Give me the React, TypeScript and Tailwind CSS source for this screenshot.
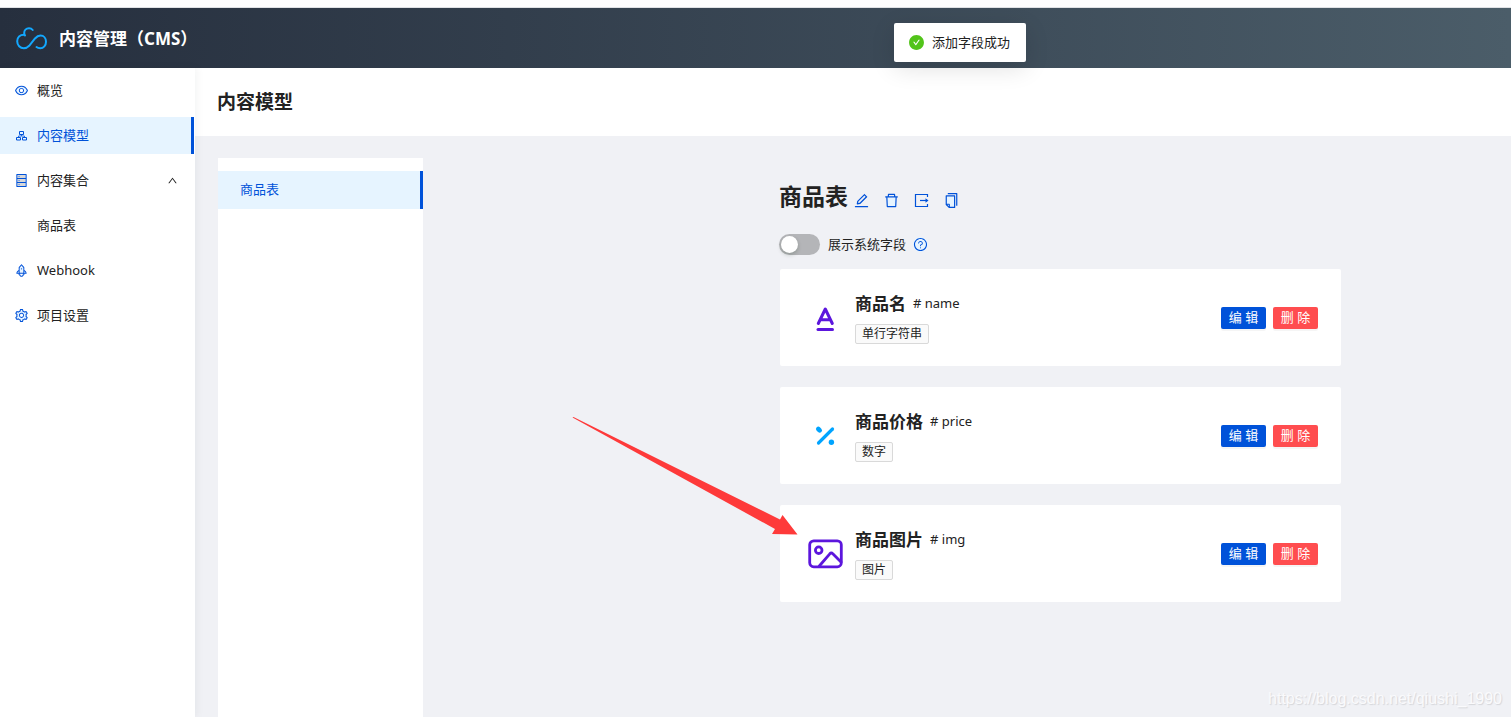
import type { ReactNode } from 'react';
import {
  AiFillCheckCircle,
  AiOutlineEdit,
  AiOutlineQuestionCircle,
  AiOutlineUp,
  AiTwotoneCopy,
  AiTwotoneDatabase,
  AiTwotoneDelete,
  AiTwotoneEye,
  AiTwotoneRocket,
  AiTwotoneSetting,
} from 'react-icons/ai';

// second tone of the two-tone icons
const TWO_TONE = 'text-[#0052d9] [&_path[fill="#D9D9D9"]]:fill-[#e6f4ff] [&_path[fill="#E6E6E6"]]:fill-[#e6f4ff]';

interface Field {
  title: string;
  name: string;
  type: string;
  icon: ReactNode;
}

function ModelIcon() {
  return (
    <svg width="15" height="15" viewBox="0 0 15 15" fill="none" stroke="currentColor">
      <path d="M5.500 3.500h4v3h-4zM2.500 9.500h4v2.500h-4zM8.500 9.500h4v2.500h-4z" />
      <path d="M7.500 6.500v1.500M4.500 9.500v-1.500h6v1.500" strokeWidth="0.800" />
    </svg>
  );
}

function ExportIcon() {
  return (
    <svg width="17" height="17" viewBox="0 0 17 17" fill="none" stroke="currentColor" strokeWidth="1.200">
      <path d="M14.500 5V2.500h-12v12h12V12" />
      <path d="M7 8.500h7.500" />
      <path d="m12.500 6.300 3 2.200-3 2.200Z" fill="currentColor" stroke="none" />
    </svg>
  );
}

function StringIcon() {
  return (
    <svg width="36" height="36" viewBox="0 0 36 36" fill="none" stroke="#5c16dd" strokeWidth="3" strokeLinecap="round" strokeLinejoin="round">
      <path d="m11.300 23.500 7-14.500 7 14.500M14 19.700h8.600" />
      <path d="M11 29.500h14.500" />
    </svg>
  );
}

function NumberIcon() {
  return (
    <svg width="36" height="36" viewBox="0 0 36 36" fill="none">
      <path d="M11.500 25 25.500 11" stroke="#00a4ff" strokeWidth="3.200" strokeLinecap="round" />
      <path d="m11.300 11 1.400 1.400" stroke="#00a4ff" strokeWidth="4.600" strokeLinecap="round" />
      <circle cx="24.400" cy="24.200" r="2.700" fill="#00a4ff" />
    </svg>
  );
}

function ImageIcon() {
  return (
    <svg width="36" height="36" viewBox="0 0 36 36" fill="none" stroke="#5c16dd" strokeWidth="2.800" strokeLinecap="round" strokeLinejoin="round">
      <rect x="2.700" y="4.800" width="31.600" height="26" rx="4" />
      <circle cx="11.700" cy="14.200" r="3.300" />
      <path d="m12.300 30 10.500-12.200q1.500-1.600 3 0L34 26" />
    </svg>
  );
}

const FIELDS: Field[] = [
  { title: '商品名', name: 'name', type: '单行字符串', icon: <StringIcon /> },
  { title: '商品价格', name: 'price', type: '数字', icon: <NumberIcon /> },
  { title: '商品图片', name: 'img', type: '图片', icon: <ImageIcon /> },
];

function MenuItem({ icon, label, active, open }: { icon?: ReactNode; label: string; active?: boolean; open?: boolean }) {
  return (
    <a
      href="#"
      aria-current={active ? 'page' : undefined}
      className={`flex h-[37px] items-center gap-2 pl-[14px] pr-4 ${
        active ? 'border-r-[3px] border-[#0052d9] bg-[#e6f4ff] text-[#0052d9]' : ''
      }`}
    >
      <span className={`w-[15px] text-[15px] ${TWO_TONE}`}>{icon}</span>
      <span className="flex-1">{label}</span>
      {open && <AiOutlineUp size={11} />}
    </a>
  );
}

function FieldCard({ field }: { field: Field }) {
  return (
    <li className="flex h-[97px] items-center rounded-xs bg-white pl-[27px] pr-[23px]">
      {field.icon}
      <div className="ml-3 flex-1">
        <div className="flex items-center gap-[7px]">
          <h3 className="text-[17px] leading-6 font-bold">{field.title}</h3>
          <span># {field.name}</span>
        </div>
        <span className="mt-2 inline-flex h-5 items-center rounded-xs border border-[#d9d9d9] bg-[#fafafa] px-[6px] text-xs">
          {field.type}
        </span>
      </div>
      <div className="flex gap-[7px] text-white">
        <button type="button" className="h-[22px] w-[45px] rounded-xs bg-[#0052d9] shadow-[0_2px_0_rgba(0,0,0,0.04)]">
          编 辑
        </button>
        <button type="button" className="h-[22px] w-[45px] rounded-xs bg-[#ff4d4f] shadow-[0_2px_0_rgba(0,0,0,0.04)]">
          删 除
        </button>
      </div>
    </li>
  );
}

export default function App() {
  return (
    <div className="relative flex min-h-screen flex-col overflow-hidden bg-[#f0f1f5] font-['Noto_Sans','Noto_Sans_CJK_SC',sans-serif] text-[13px] text-[#222]">
      <div className="h-2 border-b border-[#dfe1e5] bg-[#fdfdfe]" />

      <header className="flex h-[60px] items-center gap-3 bg-linear-to-r from-[#262f3e] to-[#4b5d69] pt-[2px] pl-4 text-white">
        <svg width="31" height="24" viewBox="0 0 31 24" fill="none" stroke="#13a8ff" strokeWidth="2" strokeLinecap="round">
          <path d="M16.700 3C15.700 1.700 14.500 1.300 13 1.300 10 1.300 8.200 3.500 8.200 6c0 1 .3 1.700.8 2.500" />
          <path d="M8 7.700C4 7.700 1.200 10.500 1.200 14.300c0 4 3 7 6.600 7 2.200 0 3.800-.9 5.400-2.500L19 11.500c1.600-1.800 3.200-3 5.500-3 3.300 0 5.500 2.700 5.500 6.200 0 3.800-2.500 6.600-5.700 6.600-1.500 0-2.700-.3-3.800-1.200" />
        </svg>
        <h1 className="text-[17px] font-bold">内容管理（CMS）</h1>
      </header>

      <div className="flex flex-1">
        <nav className="z-10 flex w-[195px] shrink-0 flex-col gap-2 bg-white pt-1 pr-px shadow-[2px_0_8px_rgba(29,35,41,0.05)]">
          <MenuItem icon={<AiTwotoneEye />} label="概览" />
          <MenuItem icon={<ModelIcon />} label="内容模型" active />
          <MenuItem icon={<AiTwotoneDatabase />} label="内容集合" open />
          <MenuItem label="商品表" />
          <MenuItem icon={<AiTwotoneRocket />} label="Webhook" />
          <MenuItem icon={<AiTwotoneSetting />} label="项目设置" />
        </nav>

        <main className="flex flex-1 flex-col">
          <div className="flex h-[68px] items-center bg-white pl-[22px]">
            <h2 className="text-[19px] font-bold">内容模型</h2>
          </div>

          <div className="flex flex-1 pt-[22px] pr-[22px] pl-[23px]">
            <div className="w-[205px] shrink-0 bg-white pt-[13px]">
              <a href="#" className="flex h-[38px] items-center border-r-[3px] border-[#0052d9] bg-[#e6f4ff] pl-[22px] text-[#0052d9]">
                商品表
              </a>
            </div>

            <section className="flex flex-1 justify-center pt-5 pl-[208px]">
              <div className="w-full max-w-[562px]">
                <div className="flex h-9 items-center gap-[5px]">
                  <h2 className="text-[23px] font-bold">商品表</h2>
                  <div className={`mt-2 flex gap-[13px] ${TWO_TONE}`}>
                    <button type="button" aria-label="编辑"><AiOutlineEdit size={17} /></button>
                    <button type="button" aria-label="删除"><AiTwotoneDelete size={17} /></button>
                    <button type="button" aria-label="导出"><ExportIcon /></button>
                    <button type="button" aria-label="复制"><AiTwotoneCopy size={17} /></button>
                  </div>
                </div>

                <div className="mt-5 flex h-[21px] items-center">
                  <label className="flex items-center gap-2">
                    <input
                      type="checkbox"
                      role="switch"
                      className="h-[21px] w-[41px] appearance-none rounded-full bg-[#b4b5b8] p-[2px] before:block before:size-[17px] before:rounded-full before:bg-white before:shadow-[0_2px_4px_rgba(0,35,11,0.2)]"
                    />
                    展示系统字段
                  </label>
                  <AiOutlineQuestionCircle size={15} className="ml-[7px] rounded-full bg-[#e6f4ff] text-[#0052d9]" />
                </div>

                <ul className="mt-[14px] flex flex-col gap-[21px] pl-px">
                  {FIELDS.map((field) => (
                    <FieldCard key={field.name} field={field} />
                  ))}
                </ul>
              </div>
            </section>
          </div>
        </main>
      </div>

      {/* success toast */}
      <div
        role="status"
        className="absolute top-[23px] left-[894px] z-20 flex h-[39px] items-center gap-[7px] rounded-xs bg-white pr-4 pl-[14px] shadow-[0_6px_24px_rgba(0,0,0,0.12)]"
      >
        <AiFillCheckCircle size={17} className="text-[#52c41a]" />
        添加字段成功
      </div>

      {/* pointer to the new field */}
      <svg className="pointer-events-none absolute top-[415px] left-[570px] z-20" width="230" height="125" viewBox="0 0 230 125" fill="#fe3a3a">
        <path d="M2.500 2.500 3.500 2 210 104.500l2.500-4.500 15 19.500-25.500-.5 3-5Z" />
      </svg>

      <span className="pointer-events-none absolute right-[9px] bottom-2 font-['Liberation_Sans',sans-serif] text-base leading-5 text-[#fafafc] [text-shadow:1px_1px_1px_#d4d5d9]">
        https://blog.csdn.net/qiushi_1990
      </span>
    </div>
  );
}
